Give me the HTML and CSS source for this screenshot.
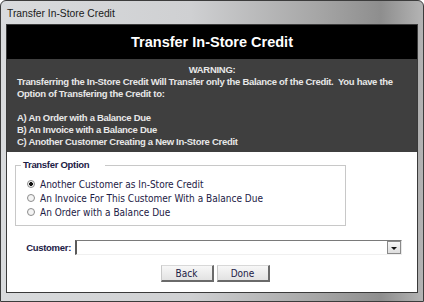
FILE: index.html
```html
<!DOCTYPE html>
<html lang="en">
<head>
    <meta charset="UTF-8">
    <title>Transfer In-Store Credit</title>
    <link rel="stylesheet" href="styles.css">
</head>
<body>
    <div class="window">
        <div class="titlebar">Transfer In-Store Credit</div>
        <div class="client">
            <div class="banner">Transfer In-Store Credit</div>
            <div class="warning">
                <p class="warning-title">WARNING:</p>
                <p>Transferring the In-Store Credit Will Transfer only the Balance of the Credit.&nbsp; You have the<br>Option of Transfering the Credit to:</p>
                <p class="choices">A) An Order with a Balance Due<br>B) An Invoice with a Balance Due<br>C) Another Customer Creating a New In-Store Credit</p>
            </div>
            <div class="form">
                <fieldset class="group">
                    <legend>Transfer Option</legend>
                    <label class="option"><input type="radio" name="opt" checked> Another Customer as In-Store Credit</label>
                    <label class="option"><input type="radio" name="opt"> An Invoice For This Customer With a Balance Due</label>
                    <label class="option"><input type="radio" name="opt"> An Order with a Balance Due</label>
                </fieldset>
                <div class="customer-row">
                    <label class="customer-label">Customer:</label>
                    <div class="combo">
                        <span class="combo-btn"></span>
                    </div>
                </div>
                <div class="buttons">
                    <button class="btn">Back</button>
                    <button class="btn">Done</button>
                </div>
            </div>
        </div>
    </div>
</body>
</html>
```

FILE: styles.css
```css
body {
    margin: 0;
    width: 424px;
    height: 302px;
    overflow: hidden;
    background-color: #ffffff;
}

.window {
    box-sizing: border-box;
    width: 424px;
    height: 302px;
    display: flex;
    flex-direction: column;
    padding: 0 5px 8px 5px;
    border: 1px solid #3c3c3c;
    border-radius: 6px 6px 0 0;
    background: linear-gradient(to right, #d9dbdd 0%, #cfd0d2 45%, #a6a6a6 75%, #8e8e8e 90%, #b4b4b4 100%);
}

.titlebar {
    height: 23px;
    line-height: 25px;
    padding-left: 1px;
    font-family: "Liberation Sans", Arial, sans-serif;
    font-size: 10.3px;
    color: #1a1a1a;
}

.client {
    flex: 1;
    display: flex;
    flex-direction: column;
    border: 1px solid #3a3a3a;
    background-color: #ffffff;
}

.banner {
    height: 34px;
    line-height: 34px;
    background-color: #000000;
    color: #ffffff;
    text-align: center;
    font-family: "Liberation Sans", Arial, sans-serif;
    font-weight: bold;
    font-size: 14.5px;
}

.warning {
    height: 93px;
    box-sizing: border-box;
    padding: 5px 10px 4px 10px;
    background-color: #3f3f3f;
    color: #e8e8e8;
    font-family: "Liberation Sans", Arial, sans-serif;
    font-weight: bold;
    font-size: 9.5px;
    letter-spacing: -0.3px;
    line-height: 12px;
    white-space: nowrap;
}

.warning p {
    margin: 0;
}

.warning-title {
    text-align: center;
}

.warning .choices {
    margin-top: 12px;
}

.form {
    flex: 1;
    display: flex;
    flex-direction: column;
}

.group {
    width: 331px;
    box-sizing: border-box;
    margin: 6px 0 0 8px;
    padding: 5px 0 6px 5px;
    border: 1px solid #c8c8c8;
    display: flex;
    flex-direction: column;
}

.group legend {
    padding: 0 16px 0 2px;
    line-height: 14px;
    font-family: "Liberation Sans", Arial, sans-serif;
    font-weight: bold;
    font-size: 9.5px;
    letter-spacing: -0.3px;
    color: #1c2045;
}

.option {
    display: flex;
    align-items: center;
    height: 14px;
    padding-left: 6px;
    font-family: "DejaVu Sans Condensed", "DejaVu Sans", sans-serif;
    font-size: 10px;
    color: #1c2045;
}

.option input {
    appearance: none;
    width: 8px;
    height: 8px;
    margin: 0 5px 0 0;
    border: 1px solid #8c8c8c;
    border-radius: 50%;
    background-color: #f4f4f4;
    box-sizing: border-box;
}

.option input:checked {
    background: radial-gradient(circle, #111111 0, #111111 1.6px, #f4f4f4 2.2px);
}

.customer-row {
    display: flex;
    align-items: center;
    margin-top: 14px;
    padding-left: 17px;
    height: 15px;
}

.customer-label {
    width: 47px;
    margin-right: 4px;
    text-align: right;
    white-space: nowrap;
    font-family: "Liberation Sans", Arial, sans-serif;
    font-weight: bold;
    font-size: 9.5px;
    letter-spacing: -0.3px;
    color: #1c2045;
}

.combo {
    box-sizing: border-box;
    width: 327px;
    height: 15px;
    display: flex;
    justify-content: flex-end;
    align-items: center;
    border-top: 1px solid #7a7a7a;
    border-left: 2px solid #5a5a5a;
    border-right: 1px solid #e8e8e8;
    border-bottom: 1px solid #f0f0f0;
    background-color: #ffffff;
}

.combo-btn {
    box-sizing: border-box;
    width: 14px;
    height: 13px;
    border: 1px solid #8a8a8a;
    background: linear-gradient(#f6f6f6, #dedede);
    display: flex;
    justify-content: center;
    align-items: center;
}

.combo-btn::after {
    content: "";
    border-left: 3px solid transparent;
    border-right: 3px solid transparent;
    border-top: 3px solid #111111;
    margin-top: 2px;
}

.buttons {
    display: flex;
    justify-content: center;
    gap: 3px;
    margin-top: 10px;
    padding-left: 6px;
}

.btn {
    box-sizing: border-box;
    width: 53px;
    height: 17px;
    padding: 0;
    border-top: 1px solid #d8d8d8;
    border-left: 1px solid #c8c8c8;
    border-right: 2px solid #6a6a6a;
    border-bottom: 2px solid #6a6a6a;
    background: linear-gradient(#f7f7f7, #e2e2e2);
    font-family: "DejaVu Sans Condensed", "DejaVu Sans", sans-serif;
    font-size: 10px;
    color: #1c2045;
}
```
